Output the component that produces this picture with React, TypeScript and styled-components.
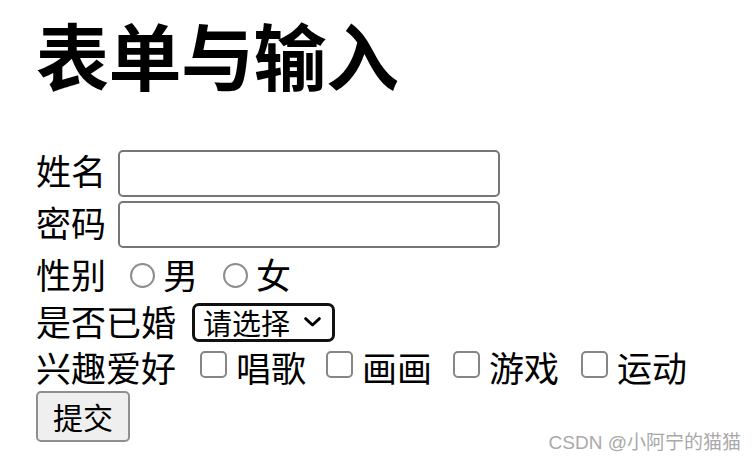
import styled, { createGlobalStyle } from 'styled-components';

const GlobalStyle = createGlobalStyle`
  html, body {
    margin: 0;
    padding: 0;
    background: #ffffff;
  }
  body {
    font-family: "Noto Sans CJK SC", "Noto Sans", sans-serif;
    color: #000000;
  }
`;

const Page = styled.div`
  position: relative;
  width: 756px;
  height: 460px;
  overflow: hidden;
  padding: 0 0 0 36px;
  box-sizing: border-box;
`;

const Title = styled.h1`
  margin: 0 0 42px;
  font-size: 73px;
  line-height: 106px;
  font-weight: 700;
  letter-spacing: -0.5px;
`;

const Form = styled.form`
  display: flex;
  flex-direction: column;
`;

const Row = styled.div<{ $h: number }>`
  display: flex;
  align-items: center;
  height: ${({ $h }) => $h}px;
`;

const Label = styled.span<{ $gap: number; $lift?: number }>`
  font-size: 35px;
  line-height: 1;
  margin-right: ${({ $gap }) => $gap}px;
  padding-bottom: ${({ $lift = 0 }) => $lift}px;
  white-space: nowrap;
`;

const TextInput = styled.input`
  box-sizing: border-box;
  width: 382px;
  height: 47px;
  margin: 0;
  padding: 2px 6px;
  border: 2px solid #767676;
  border-radius: 5px;
  font-size: 28px;
  font-family: inherit;
  background: #ffffff;
  outline: none;
`;

const Radio = styled.input.attrs({ type: 'radio' })`
  appearance: none;
  box-sizing: border-box;
  flex: none;
  width: 25px;
  height: 25px;
  margin: 4px 8px 0 0;
  border: 2px solid #8d8d8d;
  border-radius: 50%;
  background: #ffffff;
`;

const Check = styled.input.attrs({ type: 'checkbox' })`
  appearance: none;
  box-sizing: border-box;
  flex: none;
  width: 27px;
  height: 27px;
  margin: -4px 9px 0 0;
  border: 2px solid #868686;
  border-radius: 5px;
  background: #ffffff;
`;

const Option = styled.label<{ $after: number }>`
  display: flex;
  align-items: center;
  font-size: 35px;
  line-height: 1;
  margin-right: ${({ $after }) => $after}px;
`;

const chevron =
  "data:image/svg+xml;utf8,<svg xmlns='http://www.w3.org/2000/svg' width='17' height='10' viewBox='0 0 17 10'><path d='M1.6 1.6 L8.5 8 L15.4 1.6' fill='none' stroke='%23000' stroke-width='2.8' stroke-linecap='round' stroke-linejoin='round'/></svg>";

const Select = styled.select`
  appearance: none;
  box-sizing: border-box;
  width: 143px;
  height: 39px;
  margin: 2px 0 0;
  padding: 0 0 0 8px;
  border: 3px solid #111111;
  border-radius: 7px;
  font-family: inherit;
  font-size: 29px;
  line-height: 1;
  color: #000000;
  background: #ffffff url("${chevron}") no-repeat right 11px center / 17px 10px;
`;

const Submit = styled.button`
  box-sizing: border-box;
  width: 94px;
  height: 51px;
  margin: 0;
  padding: 0;
  border: 2px solid #8f8f8f;
  border-radius: 5px;
  background: #efefef;
  font-family: inherit;
  font-size: 30px;
  line-height: 1;
  color: #000000;
`;

const Watermark = styled.div`
  position: absolute;
  right: 15px;
  bottom: 6px;
  font-family: "Liberation Sans", "Noto Sans CJK SC", sans-serif;
  font-size: 19px;
  line-height: 22px;
  color: #a9a9a9;
  white-space: nowrap;
`;

const hobbies = [
  { name: '唱歌', after: 20 },
  { name: '画画', after: 21 },
  { name: '游戏', after: 22 },
  { name: '运动', after: 0 },
];

export default function App() {
  return (
    <>
      <GlobalStyle />
      <Page>
        <Title>表单与输入</Title>
        <Form onSubmit={(e) => e.preventDefault()}>
          <Row $h={51}>
            <Label $gap={12} $lift={8}>姓名</Label>
            <TextInput type="text" />
          </Row>
          <Row $h={51}>
            <Label $gap={12} $lift={6}>密码</Label>
            <TextInput type="password" />
          </Row>
          <Row $h={46}>
            <Label $gap={24}>性别</Label>
            <Option $after={25}>
              <Radio name="sex" />男
            </Option>
            <Option $after={0}>
              <Radio name="sex" />女
            </Option>
          </Row>
          <Row $h={50}>
            <Label $gap={16} $lift={2}>是否已婚</Label>
            <Select defaultValue="">
              <option value="">请选择</option>
              <option value="yes">已婚</option>
              <option value="no">未婚</option>
            </Select>
          </Row>
          <Row $h={40}>
            <Label $gap={24}>兴趣爱好</Label>
            {hobbies.map((h) => (
              <Option key={h.name} $after={h.after}>
                <Check />
                {h.name}
              </Option>
            ))}
          </Row>
          <Row $h={60}>
            <Submit type="submit">提交</Submit>
          </Row>
        </Form>
        <Watermark>CSDN @小阿宁的猫猫</Watermark>
      </Page>
    </>
  );
}
